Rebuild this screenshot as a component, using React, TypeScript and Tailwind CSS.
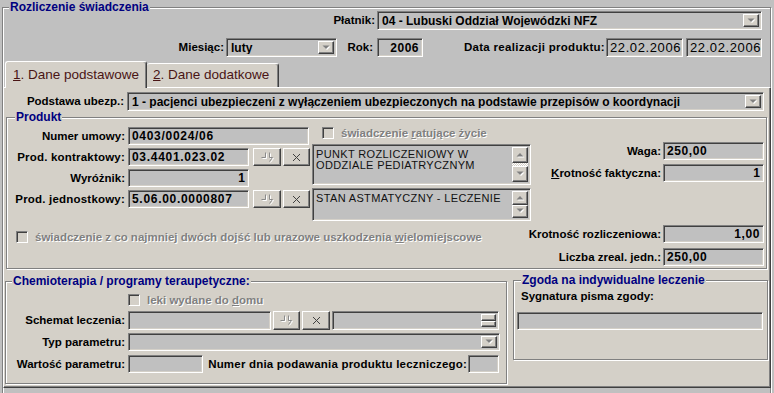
import React from "react";

const sunken =
  "border border-t-[#808080] border-l-[#808080] border-b-white border-r-white shadow-[inset_1px_1px_0_#404040,inset_-1px_-1px_0_#d4d0c8]";
const raised =
  "border border-t-white border-l-white border-b-[#404040] border-r-[#404040] shadow-[inset_-1px_-1px_0_#808080] bg-[#d4d0c8]";
const etched = "border border-[#808080] shadow-[inset_1px_1px_0_#fff,1px_1px_0_#fff]";
const grayText = "text-[#808080] [text-shadow:1px_1px_0_#fff]";

function Label({ children, className = "" }: { children: React.ReactNode; className?: string }) {
  return (
    <div className={`text-[11.5px] font-bold leading-[13px] whitespace-nowrap shrink-0 ${className}`}>
      {children}
    </div>
  );
}

function Field({
  value,
  className = "",
  right,
}: {
  value?: React.ReactNode;
  className?: string;
  right?: boolean;
}) {
  return (
    <div
      className={`${sunken} bg-[#c0c0c0] flex items-center px-[3px] overflow-hidden whitespace-nowrap shrink-0 ${
        right ? "justify-end" : ""
      } ${className}`}
    >
      {value}
    </div>
  );
}

function DownArrow({ up }: { up?: boolean }) {
  const d = up ? "M0.5 4.5L4 1L7.5 4.5Z" : "M0.5 0.5L7.5 0.5L4 4Z";
  return (
    <svg width="9" height="6" viewBox="0 0 9 6">
      <path d={d} fill="#fff" transform="translate(1,1)" />
      <path d={d} fill="#808080" />
    </svg>
  );
}

function Combo({ value, className = "" }: { value?: React.ReactNode; className?: string }) {
  return (
    <div className={`${sunken} bg-[#c0c0c0] flex p-[2px] shrink-0 ${className}`}>
      <div className="flex-1 flex items-center pl-[2px] text-[12px] font-bold whitespace-nowrap overflow-hidden">
        {value}
      </div>
      <div className={`${raised} w-[16px] h-full flex items-center justify-center`}>
        <DownArrow />
      </div>
    </div>
  );
}

function Btn({ className = "", children }: { className?: string; children: React.ReactNode }) {
  return (
    <div className={`${raised} h-full flex items-center justify-center shrink-0 ${className}`}>{children}</div>
  );
}

function MergeIcon() {
  const d = "M1.5 6.5H5.5V1.5M9.5 1.5V6.5H12.5L9.5 10.5";
  return (
    <svg width="15" height="13" viewBox="0 0 15 13">
      <path d={d} transform="translate(1,1)" stroke="#fff" fill="none" />
      <path d={d} stroke="#8a8a8a" fill="none" />
    </svg>
  );
}

function XIcon() {
  return (
    <svg width="9" height="9" viewBox="0 0 9 9">
      <path d="M1 1L8 8M8 1L1 8" stroke="#404040" strokeWidth="1" fill="none" />
    </svg>
  );
}

function Check({ className = "" }: { className?: string }) {
  return <div className={`w-[12px] h-[12px] ${sunken} bg-[#d4d0c8] shrink-0 ${className}`} />;
}

function Memo({ children, className = "", track }: { children: React.ReactNode; className?: string; track?: boolean }) {
  return (
    <div className={`${sunken} bg-[#c0c0c0] flex p-[2px] ${className}`}>
      <div className="flex-1 text-[11px] tracking-[0.35px] leading-[11px] pl-[1px] pt-[2px] text-[#111] whitespace-nowrap overflow-hidden">
        {children}
      </div>
      <div className="w-[16px] flex flex-col">
        <div className={`${raised} h-[16px] flex items-center justify-center`}>
          <DownArrow up />
        </div>
        <div
          className={`flex-1 ${
            track
              ? "bg-[repeating-conic-gradient(#ffffff_0%_25%,#d4d0c8_0%_50%)] bg-[length:2px_2px]"
              : ""
          }`}
        />
        <div className={`${raised} h-[16px] flex items-center justify-center`}>
          <DownArrow />
        </div>
      </div>
    </div>
  );
}

function Group({
  title,
  className = "",
  titleClass = "",
  children,
}: {
  title: string;
  className?: string;
  titleClass?: string;
  children?: React.ReactNode;
}) {
  return (
    <div className={`relative ${etched} ${className}`}>
      <span
        className={`absolute -top-[8px] px-[1px] text-[12px] font-bold leading-[14px] text-[#000080] whitespace-nowrap ${titleClass}`}
      >
        {title}
      </span>
      {children}
    </div>
  );
}

export default function App() {
  return (
    <div className="w-[774px] h-[393px] overflow-hidden bg-[#c0c0c0] text-black font-['Liberation_Sans',Arial,sans-serif] select-none">
      <Group
        title="Rozliczenie świadczenia"
        className="mt-[7px] ml-[2px] w-[769px] h-[400px]"
        titleClass="left-[6px] bg-[#c0c0c0]"
      >
        {/* Płatnik */}
        <div className="mt-[3px] h-[19px] flex items-center">
          <Label className="w-[374px] pr-[2px] text-right">Płatnik:</Label>
          <Combo className="w-[385px] h-[19px]" value="04 - Lubuski Oddział Wojewódzki NFZ" />
        </div>

        {/* Miesiąc / Rok / Data */}
        <div className="mt-[8px] h-[19px] flex items-center">
          <Label className="w-[223px] pr-[2px] text-right">Miesiąc:</Label>
          <Combo className="w-[111px] h-[19px]" value="luty" />
          <Label className="w-[40px] pr-[4px] text-right">Rok:</Label>
          <Field
            className="w-[46px] h-[19px] text-[12px] font-bold tracking-[0.5px]"
            right
            value="2006"
          />
          <Label className="w-[183px] pr-[1px] text-right tracking-[0.3px]">Data realizacji produktu:</Label>
          <Field className="w-[77px] h-[19px] text-[13px] tracking-[0.6px]" value="22.02.2006" />
          <Field className="ml-[3px] w-[76px] h-[19px] text-[13px] tracking-[0.6px]" value="22.02.2006" />
        </div>

        {/* Tabs */}
        <div className="mt-[4px] h-[26px] flex items-end">
          <div className="relative z-10 -mb-px ml-[2px] w-[142px] h-[27px] bg-[#d4d0c8] border-t border-l border-white border-r border-r-[#404040] rounded-t-[3px] shadow-[inset_-1px_0_0_#808080] flex items-center pl-[7px] text-[13.5px] text-[#4a1515]">
            <span className="underline">1</span>. Dane podstawowe
          </div>
          <div className="w-[132px] h-[24px] bg-[#d4d0c8] border-t border-white border-r border-r-[#404040] rounded-t-[3px] shadow-[inset_-1px_0_0_#808080] flex items-center pl-[6px] text-[13.5px] text-[#4a1515]">
            <span className="underline">2</span>. Dane dodatkowe
          </div>
        </div>

        {/* Tab page */}
        <div className="w-[768px] h-[301px] bg-[#d4d0c8] border border-t-white border-l-white border-r-[#404040] border-b-[#404040] shadow-[inset_-1px_-1px_0_#808080]">
          <div className="mt-[4px] h-[19px] flex items-center">
            <Label className="w-[123px] pr-[3px] text-right">Podstawa ubezp.:</Label>
            <Combo
              className="w-[637px] h-[19px]"
              value="1 - pacjenci ubezpieczeni z wyłączeniem ubezpieczonych na podstawie przepisów o koordynacji"
            />
          </div>

          {/* Produkt */}
          <Group title="Produkt" className="mt-[6px] ml-[2px] w-[761px] h-[152px] flex" titleClass="left-[8px] bg-[#d4d0c8]">
            <div className="w-[524px] flex flex-col">
              <div className="flex">
                <div className="w-[303px] pt-[9px] flex flex-col gap-[3px]">
                  <div className="h-[18px] flex items-center">
                    <Label className="w-[121px] pr-[3px] text-right">Numer umowy:</Label>
                    <Field className="w-[181px] h-[18px] text-[12px] font-bold tracking-[0.7px]" value="0403/0024/06" />
                  </div>
                  <div className="h-[18px] flex items-center">
                    <Label className="w-[121px] pr-[3px] text-right tracking-[0.2px]">Prod. kontraktowy:</Label>
                    <Field className="w-[121px] h-[18px] text-[12px] font-bold tracking-[0.7px]" value="03.4401.023.02" />
                    <Btn className="ml-[4px] w-[28px]">
                      <MergeIcon />
                    </Btn>
                    <Btn className="ml-[2px] w-[27px]">
                      <XIcon />
                    </Btn>
                  </div>
                  <div className="h-[18px] flex items-center">
                    <Label className="w-[121px] pr-[3px] text-right">Wyróżnik:</Label>
                    <Field className="w-[121px] h-[18px] text-[12px] font-bold" right value="1" />
                  </div>
                  <div className="h-[18px] flex items-center">
                    <Label className="w-[121px] pr-[3px] text-right tracking-[0.2px]">Prod. jednostkowy:</Label>
                    <Field className="w-[121px] h-[18px] text-[12px] font-bold tracking-[0.7px]" value="5.06.00.0000807" />
                    <Btn className="ml-[4px] w-[28px]">
                      <MergeIcon />
                    </Btn>
                    <Btn className="ml-[2px] w-[27px]">
                      <XIcon />
                    </Btn>
                  </div>
                </div>
                <div className="ml-[2px] w-[219px] flex flex-col">
                  <div className="mt-[9px] h-[12px] flex items-center">
                    <Check className="ml-[10px]" />
                    <Label className={`ml-[7px] ${grayText}`}>
                      świadczenie <span className="underline">r</span>atujące życie
                    </Label>
                  </div>
                  <Memo className="mt-[5px] h-[41px]" track>
                    PUNKT ROZLICZENIOWY W
                    <br />
                    ODDZIALE PEDIATRYCZNYM
                  </Memo>
                  <Memo className="mt-[3px] h-[33px]">STAN ASTMATYCZNY - LECZENIE</Memo>
                </div>
              </div>
              <div className="mt-[10px] h-[12px] flex items-center">
                <Check className="ml-[9px]" />
                <Label className={`ml-[7px] ${grayText}`}>
                  świadczenie z co najmniej dwóch dojść lub urazowe uszkodzenia{" "}
                  <span className="underline">w</span>ielomiejscowe
                </Label>
              </div>
            </div>

            <div className="w-[235px] pr-[2px] flex flex-col items-end">
              <div className="mt-[24px] h-[18px] flex items-center">
                <Label className="pr-[2px]">Waga:</Label>
                <Field className="w-[101px] h-[18px] text-[12px] font-bold tracking-[0.6px]" value="250,00" />
              </div>
              <div className="mt-[4px] h-[18px] flex items-center">
                <Label className="pr-[2px]">
                  <span className="underline">K</span>rotność faktyczna:
                </Label>
                <Field className="w-[101px] h-[18px] text-[12px] font-bold" right value="1" />
              </div>
              <div className="mt-[43px] h-[18px] flex items-center">
                <Label className="pr-[2px]">Krotność rozliczeniowa:</Label>
                <Field className="w-[101px] h-[18px] text-[12px] font-bold tracking-[0.6px]" right value="1,00" />
              </div>
              <div className="mt-[5px] h-[18px] flex items-center">
                <Label className="pr-[2px]">Liczba zreal. jedn.:</Label>
                <Field className="w-[101px] h-[18px] text-[12px] font-bold tracking-[0.6px]" value="250,00" />
              </div>
            </div>
          </Group>

          {/* Bottom groups */}
          <div className="mt-[12px] flex items-start">
            <Group
              title="Chemioterapia / programy teraupetyczne:"
              className="ml-[1px] w-[502px] h-[103px]"
              titleClass="left-[6px] bg-[#d4d0c8]"
            >
              <div className="mt-[12px] h-[12px] flex items-center">
                <Check className="ml-[122px]" />
                <Label className={`ml-[7px] ${grayText}`}>
                  leki wydane do <span className="underline">d</span>omu
                </Label>
              </div>
              <div className="mt-[5px] h-[19px] flex items-center">
                <Label className="w-[122px] pr-[3px] text-right">Schemat leczenia:</Label>
                <Field className="w-[143px] h-[19px]" />
                <Btn className="ml-[2px] w-[27px]">
                  <MergeIcon />
                </Btn>
                <Btn className="ml-[2px] w-[28px]">
                  <XIcon />
                </Btn>
                <div className={`${sunken} bg-[#c0c0c0] ml-[2px] w-[167px] h-[19px] flex justify-end p-[2px]`}>
                  <div className="w-[15px] flex flex-col">
                    <div className={`${raised} flex-1`} />
                    <div className={`${raised} flex-1`} />
                  </div>
                </div>
              </div>
              <div className="mt-[3px] h-[18px] flex items-center">
                <Label className="w-[122px] pr-[3px] text-right">Typ parametru:</Label>
                <Combo className="w-[372px] h-[18px]" />
              </div>
              <div className="mt-[4px] h-[18px] flex items-center">
                <Label className="w-[122px] pr-[3px] text-right">Wartość parametru:</Label>
                <Field className="w-[75px] h-[18px]" />
                <Label className="w-[265px] pr-[1px] text-right tracking-[0.2px]">
                  Numer dnia podawania produktu leczniczego:
                </Label>
                <Field className="w-[31px] h-[18px]" />
              </div>
            </Group>

            <Group
              title="Zgoda na indywidualne leczenie"
              className="-mt-px ml-[6px] w-[255px] h-[80px]"
              titleClass="left-[7px] bg-[#d4d0c8]"
            >
              <Label className="ml-[7px] mt-[9px]">Sygnatura pisma zgody:</Label>
              <Field className="ml-[3px] mt-[9px] w-[246px] h-[18px]" />
            </Group>
          </div>
        </div>
      </Group>
    </div>
  );
}
